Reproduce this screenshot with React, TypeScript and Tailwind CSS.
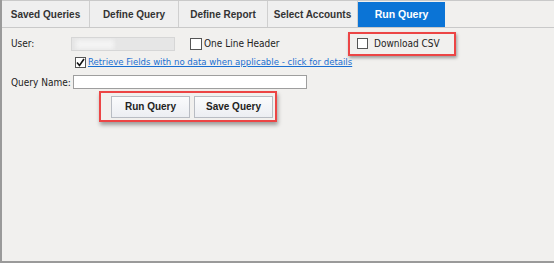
import React from "react";

const tabs = ["Saved Queries", "Define Query", "Define Report", "Select Accounts"];
const tabW = [90, 89, 89, 90];

export default function App() {
  return (
    <div
      className="relative w-[554px] h-[263px] bg-[#f1f0ee] border-l-2 border-b-2 border-[#9a9a9a] overflow-hidden"
      style={{ fontFamily: '"DejaVu Sans Condensed", Tahoma, "DejaVu Sans", sans-serif' }}
    >
      {/* tab row */}
      <div className="flex h-[28px] border-t border-b border-[#c9c9c9] bg-[#f1f0ee]">
        {tabs.map((t, i) => (
          <div
            key={t}
            className="flex items-center justify-center border-r border-[#cfcfcf] bg-[#efefef] text-[10px] font-bold text-[#333]"
            style={{ width: tabW[i] - (i === 0 ? 2 : 0), fontFamily: '"Liberation Sans", Arial, sans-serif' }}
          >
            {t}
          </div>
        ))}
        <div
          className="mt-[1px] flex w-[87px] items-center justify-center bg-[#0b74d6] text-[10.5px] font-bold text-white"
          style={{ fontFamily: '"Liberation Sans", Arial, sans-serif' }}
        >
          Run Query
        </div>
      </div>

      <div className="flex flex-col pl-[9px] pt-[3px] text-[10px] text-[#222]">
        {/* row 1 */}
        <div className="flex items-center h-[25px]">
          <div className="w-[60px]">User:</div>
          <div className="relative h-[14px] w-[104px] bg-[#e6e6e6] border border-[#d6d6d6] overflow-hidden">
            <div className="absolute left-[4px] top-[2px] h-[9px] w-[38px] bg-[#f4f4f4] blur-[2px]" />
          </div>
          <div className="ml-[15px] flex w-[158px] items-center">
            <span className="h-[12px] w-[12px] border border-[#555] bg-white" />
            <span className="ml-[2px] text-[10px]">One Line Header</span>
          </div>
          <div className="flex h-[24px] w-[108px] items-center border-2 border-[#ec4545] pl-[7px] shadow-[1px_2px_3px_rgba(0,0,0,0.35)]">
            <span className="h-[11px] w-[11px] border border-[#555] bg-white" />
            <span className="ml-[6px] text-[10px]">Download CSV</span>
          </div>
        </div>

        {/* row 2 */}
        <div className="flex items-center h-[14px] mt-[-1px]">
          <div className="ml-[64px] flex h-[11px] w-[11px] items-center justify-center border border-[#555] bg-white">
            <svg width="9" height="9" viewBox="0 0 9 9">
              <path d="M1 4.5 L3.5 7.5 L8 1" fill="none" stroke="#111" strokeWidth="1.6" />
            </svg>
          </div>
          <span className="ml-[2px] text-[9.5px] text-[#1a6fd1] underline">
            Retrieve Fields with no data when applicable - click for details
          </span>
        </div>

        {/* row 3 */}
        <div className="flex items-center h-[16px] mt-[5px]">
          <div className="w-[62px]">Query Name:</div>
          <div className="h-[14px] w-[234px] border border-[#9e9e9e] bg-white" />
        </div>

        {/* row 4 */}
        <div className="ml-[88px] mt-[1px] flex h-[31px] w-[178px] items-center gap-[4px] border-2 border-[#ec4545] pl-[10px] shadow-[1px_3px_4px_rgba(0,0,0,0.35)]">
          {["Run Query", "Save Query"].map((b) => (
            <div
              key={b}
              className="flex h-[22px] w-[79px] items-center justify-center border border-[#b8bcc3] bg-gradient-to-b from-[#fafbfc] to-[#eceef2] text-[10px] font-bold text-[#222]"
              style={{ fontFamily: '"Liberation Sans", Arial, sans-serif' }}
            >
              {b}
            </div>
          ))}
        </div>
      </div>
    </div>
  );
}
